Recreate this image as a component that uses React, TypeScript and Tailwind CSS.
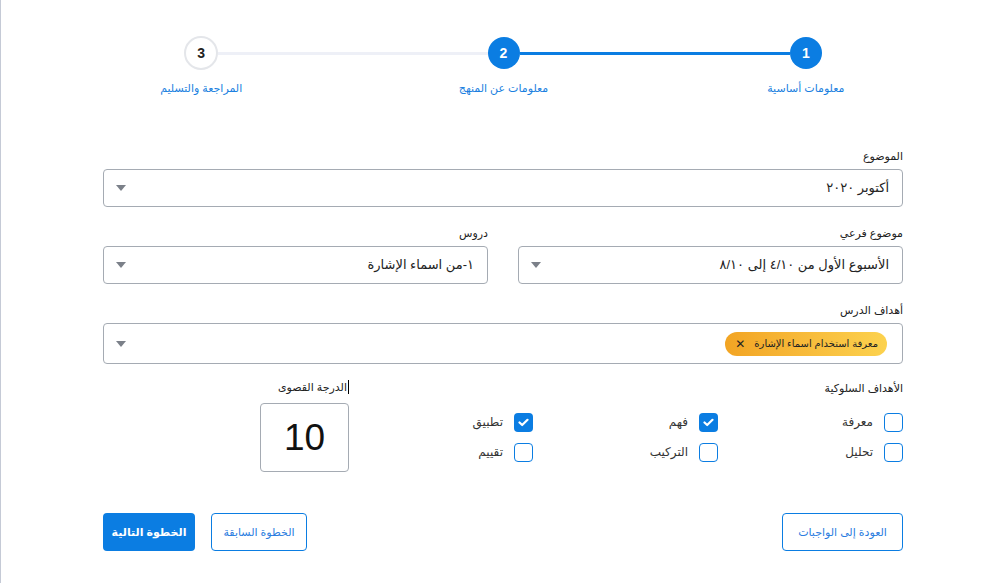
import React from "react";

const BLUE = "#0b7de2";

function Caret() {
  return (
    <svg width="10" height="6" viewBox="0 0 10 6" className="shrink-0">
      <path d="M0 0 L10 0 L5 6 Z" fill="#7b8089" />
    </svg>
  );
}

function Select({ value, className = "" }: { value?: string; className?: string }) {
  return (
    <div className={`flex h-[38px] items-center justify-between rounded-[4px] border border-[#a5abb3] bg-white pr-[13px] pl-[12px] ${className}`}>
      <span className="text-[13px] text-[#222]">{value}</span>
      <Caret />
    </div>
  );
}

function Check({ checked, label }: { checked?: boolean; label: string }) {
  return (
    <div className="flex h-[30px] items-center gap-[11px]">
      {checked ? (
        <div className="flex h-[19px] w-[19px] items-center justify-center rounded-[4px] bg-[#0b7de2]">
          <svg width="11" height="9" viewBox="0 0 11 9">
            <path d="M1.5 4.5 L4.2 7 L9.5 1.8" stroke="white" strokeWidth="2.2" fill="none" strokeLinecap="round" strokeLinejoin="round" />
          </svg>
        </div>
      ) : (
        <div className="h-[19px] w-[19px] rounded-[4px] border-[1.5px] border-[#0b7de2] bg-white" />
      )}
      <span className="text-[12px] text-[#333]">{label}</span>
    </div>
  );
}

function Step({ n, label, active, right, left }: { n: number; label: string; active: boolean; right?: string; left?: string }) {
  return (
    <div className="flex w-[302.5px] flex-col items-center">
      <div className="flex h-[34px] w-full items-center">
        <div className="h-[3px] flex-1" style={{ background: right ?? "transparent" }} />
        {active ? (
          <div className="flex h-[32px] w-[32px] items-center justify-center rounded-full bg-[#0b7de2] text-[14px] font-bold text-white">{n}</div>
        ) : (
          <div className="flex h-[34px] w-[34px] items-center justify-center rounded-full border-2 border-[#e4e6ea] bg-white text-[14px] font-bold text-[#222]">{n}</div>
        )}
        <div className="h-[3px] flex-1" style={{ background: left ?? "transparent" }} />
      </div>
      <div className="mt-[10px] text-[11px] leading-[16px] text-[#1a7fe0]">{label}</div>
    </div>
  );
}

export default function App() {
  return (
    <div
      dir="rtl"
      className="h-[583px] w-[990px] overflow-hidden border-l border-[#c5cad6] bg-white"
      style={{ fontFamily: '"Liberation Sans", "DejaVu Sans", Arial, sans-serif' }}
    >
      {/* stepper */}
      <div className="mr-[33px] flex w-[907px] pt-[36px]">
        <Step n={1} label="معلومات أساسية" active left={BLUE} />
        <Step n={2} label="معلومات عن المنهج" active right={BLUE} left="#eef0f7" />
        <Step n={3} label="المراجعة والتسليم" active={false} right="#eef0f7" />
      </div>

      {/* form */}
      <div className="mr-[87px] mt-[52px] w-[800px]">
        <div className="text-[11px] leading-[16px] text-[#222]">الموضوع</div>
        <Select value="أكتوبر ٢٠٢٠" className="mt-[5px]" />

        <div className="mt-[18px] flex gap-[30px]">
          <div className="flex-1">
            <div className="text-[11px] leading-[16px] text-[#222]">موضوع فرعي</div>
            <Select value="الأسبوع الأول من ٤/١٠ إلى ٨/١٠" className="mt-[5px]" />
          </div>
          <div className="flex-1">
            <div className="text-[11px] leading-[16px] text-[#222]">دروس</div>
            <Select value="١-من اسماء الإشارة" className="mt-[5px]" />
          </div>
        </div>

        <div className="mt-[18px] text-[11px] leading-[16px] text-[#222]">أهداف الدرس</div>
        <div className="mt-[5px] flex h-[41px] items-center justify-between rounded-[4px] border border-[#a5abb3] pr-[15px] pl-[12px]">
          <div className="flex h-[24px] items-center gap-[9px] rounded-full bg-gradient-to-l from-[#fcd24e] to-[#f2a423] pr-[9px] pl-[10px] text-[10px] text-[#222]">
            <span>معرفة استخدام اسماء الإشارة</span>
            <span className="text-[12px] leading-none">✕</span>
          </div>
          <Caret />
        </div>

        <div className="mt-[16px] flex">
          <div className="w-[555px]">
            <div className="text-[11px] leading-[16px] text-[#222]">الأهداف السلوكية</div>
            <div className="mt-[11px] grid grid-cols-3">
              <div className="flex flex-col">
                <Check label="معرفة" />
                <Check label="تحليل" />
              </div>
              <div className="flex flex-col">
                <Check checked label="فهم" />
                <Check label="التركيب" />
              </div>
              <div className="flex flex-col">
                <Check checked label="تطبيق" />
                <Check label="تقييم" />
              </div>
            </div>
          </div>
          <div className="mr-[-1px] flex flex-col items-start">
            <div className="border-r border-black pr-[1px] text-[11px] leading-[14px] text-[#222]">الدرجة القصوى</div>
            <div className="mt-[9px] flex h-[69px] w-[89px] items-center justify-center rounded-[4px] border border-[#a5abb3] text-[37px] text-[#111]">
              10
            </div>
          </div>
        </div>

        <div className="mt-[41px] flex items-center justify-between">
          <button className="flex h-[38px] w-[121px] items-center justify-center rounded-[4px] border border-[#0b7de2] bg-white text-[11px] text-[#2a7de0]">
            العودة إلى الواجبات
          </button>
          <div className="flex gap-[16px]">
            <button className="flex h-[38px] w-[96px] items-center justify-center rounded-[4px] border border-[#0b7de2] bg-white text-[11px] text-[#2a7de0]">
              الخطوة السابقة
            </button>
            <button className="flex h-[38px] w-[92px] items-center justify-center rounded-[4px] bg-[#0b7de2] text-[11px] font-bold text-white">
              الخطوة التالية
            </button>
          </div>
        </div>
      </div>
    </div>
  );
}
